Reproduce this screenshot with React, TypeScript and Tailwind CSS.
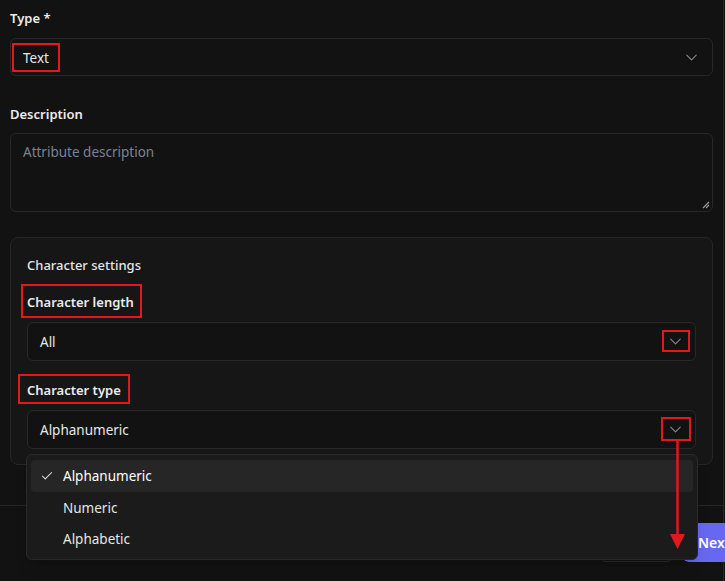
import { ChevronDown, Check } from "lucide-react"

const font = { fontFamily: '"Noto Sans", "Open Sans", sans-serif' }

function SelectBox({ value, small }: { value: string; small?: boolean }) {
  return (
    <div
      className={`flex items-center justify-between rounded-md border border-[#282828] bg-[#121212] ${
        small ? "h-[39px] pl-[12px] pr-[10px]" : "h-[38px] pl-[12px] pr-[11px]"
      }`}
    >
      <span className="pt-[2px] text-[13.5px] text-[#e8e8e8]">{value}</span>
      <ChevronDown className="h-[19px] w-[19px] text-[#8a8a8a]" strokeWidth={1.3} />
    </div>
  )
}

// red annotation marks drawn over the screenshot
function RedBox({ className }: { className: string }) {
  return <div className={`absolute border-2 border-[#e0191b] ${className}`} />
}

export default function App() {
  return (
    <div className="relative h-[581px] w-[725px] overflow-hidden bg-[#121212]" style={font}>
      <div className="flex h-full w-[724px] flex-col border-r border-[#262626]">
        {/* FORM */}
        <div className="px-[10px] pt-[8px]">
          <div className="mb-[10px] text-[13px] leading-5 font-semibold text-[#ececec]">Type *</div>
          <SelectBox value="Text" />

          <div className="mt-[28px] mb-[9px] text-[13px] leading-5 font-semibold text-[#ececec]">Description</div>
          <div className="relative h-[79px] rounded-md border border-[#282828] bg-[#121212] px-[12px] pt-[5px]">
            <span className="text-[13.5px] text-[#7a8393]">Attribute description</span>
            <svg className="absolute right-[2px] bottom-[2px]" width="8" height="8" viewBox="0 0 8 8">
              <path d="M7 1 L1 7 M7 4 L4 7" stroke="#9a9a9a" strokeWidth="1.2" />
            </svg>
          </div>

          {/* Character settings card */}
          <div className="mt-[25px] rounded-lg border border-[#262626] bg-[#161616] px-[16px] pt-[17px] pb-[15px]">
            <div className="text-[13px] leading-5 font-medium text-[#e6e6e6]">Character settings</div>

            <div className="mt-[17px] mb-[10px] text-[13px] leading-5 font-semibold text-[#ececec]">Character length</div>
            <SelectBox value="All" small />

            <div className="mt-[19px] mb-[10px] text-[13px] leading-5 font-semibold text-[#ececec]">Character type</div>
            <SelectBox value="Alphanumeric" small />
          </div>
        </div>

        {/* FOOTER */}
        <div className="mt-[40px] flex justify-end gap-[10px] border-t border-[#262626] pt-[17px]">
          <button className="h-[39px] w-[73px] shrink-0 rounded-md border border-[#2a2a2a] text-[13px] text-[#e6e6e6]">
            Cancel
          </button>
          <button className="-mr-[42px] h-[39px] w-[82px] shrink-0 rounded-md bg-[#6668f2] pl-[15px] text-left text-[14px] font-semibold text-white">
            Next
          </button>
        </div>
      </div>

      {/* OPEN DROPDOWN */}
      <div className="absolute top-[454px] left-[26px] w-[672px] rounded-md border border-[#2a2a2a] bg-[#1b1b1b] p-[4px] pt-[5px] shadow-lg">
        <div className="flex h-[32px] items-center rounded-sm bg-[#262626] pl-[9px]">
          <Check className="h-[14px] w-[14px] text-[#e6e6e6]" strokeWidth={1.8} />
          <span className="ml-[9px] text-[13.5px] text-white">Alphanumeric</span>
        </div>
        <div className="flex h-[32px] items-center pl-[32px] text-[13.5px] text-[#e6e6e6]">Numeric</div>
        <div className="flex h-[31px] items-center pl-[32px] text-[13.5px] text-[#e6e6e6]">Alphabetic</div>
      </div>

      {/* ANNOTATIONS */}
      <RedBox className="top-[43px] left-[12px] h-[29px] w-[48px]" />
      <RedBox className="top-[284px] left-[21px] h-[34px] w-[121px]" />
      <RedBox className="top-[374px] left-[18px] h-[30px] w-[112px]" />
      <RedBox className="top-[330px] left-[662px] h-[22px] w-[28px]" />
      <RedBox className="top-[417px] left-[661px] h-[24px] w-[30px]" />
      <svg className="absolute top-[440px] left-[668px]" width="20" height="112" viewBox="0 0 20 112">
        <path d="M9.5 0 V96" stroke="#e0191b" strokeWidth="2.5" />
        <path d="M2 94 L17 94 L9.5 109 Z" fill="#e0191b" />
      </svg>
    </div>
  )
}
